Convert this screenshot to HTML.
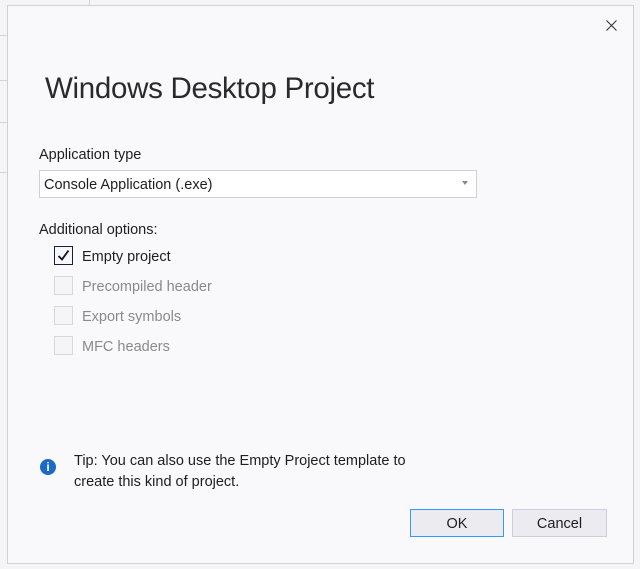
<!DOCTYPE html>
<html><head><style>
body{margin:0;width:640px;height:569px;background:#f5f5f7;position:relative;overflow:hidden;font-family:"Liberation Sans",sans-serif;color:#1e1e1e}
.ln{position:absolute;left:0;width:8px;height:1px;background:#d4d4d8}
.dlg{position:absolute;left:7px;top:5px;width:625px;height:557px;background:#f9f9fb;border:1px solid #cfcfd4}
.a{position:absolute;white-space:nowrap}
.cb{position:absolute;left:46px;width:17px;height:17px;border:1px solid #d8d8dc;background:#f5f5f7}
.btn{position:absolute;top:503px;height:26px;border:1px solid #cccedb;background:#ececf0;font-size:14.5px;text-align:center;line-height:28px}
.t{font-size:14.5px}
</style></head><body>
<div class="ln" style="top:35px"></div><div class="ln" style="top:80px"></div><div class="ln" style="top:122px"></div><div class="ln" style="top:172px;width:8px"></div>
<div style="position:absolute;left:89px;top:0;width:1px;height:5px;background:#d4d4d8"></div>
<div class="dlg">
<svg class="a" style="left:598px;top:14px" width="11" height="11"><path d="M0.5 0.5L10.5 10.5M10.5 0.5L0.5 10.5" stroke="#333" stroke-width="1.1"/></svg>
<div class="a" style="left:37px;top:66px;font-size:29.5px;color:#2a2a2a;letter-spacing:-0.3px">Windows Desktop Project</div>
<div class="a t" style="left:31px;top:141px">Application type</div>
<div class="a" style="left:31px;top:164px;width:436px;height:26px;border:1px solid #ccced8;background:#fff"><span class="a t" style="left:4px;top:6px">Console Application (.exe)</span><span class="a" style="left:422px;top:10px;width:0;height:0;border-left:3px solid transparent;border-right:3px solid transparent;border-top:4px solid #888"></span></div>
<div class="a t" style="left:31px;top:216px">Additional options:</div>
<div class="cb" style="top:240px;border-color:#1e1e2e;background:#f5f7ff"><svg width="17" height="17"><path d="M3.5 9 L7 12.5 L13.5 3.5" stroke="#111" stroke-width="1.8" fill="none"/></svg></div>
<div class="a t" style="left:74px;top:243px">Empty project</div>
<div class="cb" style="top:270px"></div><div class="a t" style="left:74px;top:273px;color:#8a8a8e">Precompiled header</div>
<div class="cb" style="top:300px"></div><div class="a t" style="left:74px;top:303px;color:#8a8a8e">Export symbols</div>
<div class="cb" style="top:330px"></div><div class="a t" style="left:74px;top:333px;color:#8a8a8e">MFC headers</div>
<div class="a" style="left:32px;top:453px;width:16px;height:16px;border-radius:50%;background:#1b6ac9;color:#fff;font-size:12px;font-weight:bold;text-align:center;line-height:16px">i</div>
<div class="a t" style="left:66px;top:445px;line-height:21px">Tip: You can also use the Empty Project template to<br>create this kind of project.</div>
<div class="btn" style="left:402px;width:92px;border-color:#3399ff">OK</div>
<div class="btn" style="left:504px;width:93px">Cancel</div>
</div>
</body></html>
